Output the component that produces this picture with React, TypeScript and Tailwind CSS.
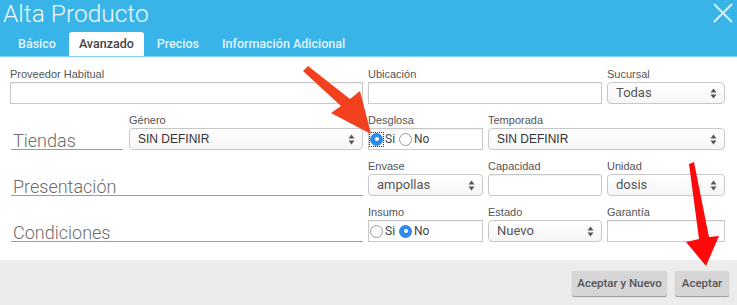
import React from 'react';

const label = "text-[11px] leading-[17px] text-[#555] h-[17px] pt-[1px]";
const inputBox = "h-[22px] border border-[#c8c8c8] bg-white shadow-[inset_0_1px_1px_rgba(0,0,0,0.06)]";

const SelectArrows = () => (
  <svg width="7" height="11" viewBox="0 0 7 11" className="shrink-0">
    <path d="M3.5 0.5 L6.5 4.5 L0.5 4.5 Z" fill="#555" />
    <path d="M3.5 10.5 L6.5 6.5 L0.5 6.5 Z" fill="#555" />
  </svg>
);

const Select: React.FC<{ value: string; sans?: boolean; pl?: string }> = ({ value, sans, pl }) => (
  <div
    className={`h-[22px] flex items-center justify-between pr-[7px] border border-[#c8c8c8] rounded-[4px] bg-gradient-to-b from-white to-[#f6f6f6] text-[#333] ${pl ?? 'pl-[8px]'} ${
      sans ? "font-['Liberation_Sans',Arial,sans-serif] text-[12px]" : "font-['Roboto',sans-serif] text-[13px] text-[#555]"
    }`}
  >
    <span>{value}</span>
    <SelectArrows />
  </div>
);

const Radio: React.FC<{ on?: boolean; focus?: boolean }> = ({ on, focus }) => (
  <span className={`inline-flex items-center justify-center ${focus ? 'outline-1 outline-dotted outline-[#333] outline-offset-0' : ''}`}>
    {on ? (
      <span className="w-[13px] h-[13px] rounded-full bg-[#2f8ce8] flex items-center justify-center">
        <span className="w-[4px] h-[4px] rounded-full bg-white" />
      </span>
    ) : (
      <span className="w-[13px] h-[13px] rounded-full border border-[#9a9a9a] bg-white" />
    )}
  </span>
);

const RadioGroup: React.FC<{ si: boolean }> = ({ si }) => (
  <div className={`${inputBox} flex items-center pl-[1px] text-[12px] text-[#444] font-['Roboto',sans-serif]`}>
    <Radio on={si} focus={si} />
    <span className="ml-[2px] mr-[4px]">Si</span>
    <Radio on={!si} />
    <span className="ml-[2px]">No</span>
  </div>
);

const Heading: React.FC<{ text: string; w: string }> = ({ text, w }) => (
  <div className={`${w} ml-[1px] h-[22px] flex items-end border-b border-[#9c9c9c] text-[18px] leading-[20px] font-light text-[#6b6b6b] font-['Roboto',sans-serif]`}>
    <span className="pl-[2px] translate-y-[2px]">{text}</span>
  </div>
);

export default function App() {
  return (
    <div className="relative w-[737px] h-[305px] bg-white overflow-hidden font-['Liberation_Sans',Arial,sans-serif]">
      {/* header */}
      <div className="bg-[#39b4e8] h-[57px] flex flex-col border-b border-[#7fd0f2]">
        <div className="flex justify-between items-start">
          <h1 className="pl-[3px] text-[24.5px] leading-[28px] font-light text-[#eef8fd] font-['Roboto',sans-serif]">Alta Producto</h1>
          <svg width="22" height="22" viewBox="0 0 22 22" className="mt-[2px] mr-[3px]">
            <path d="M2 2 L20 20 M20 2 L2 20" stroke="#d7f0fb" strokeWidth="2" />
          </svg>
        </div>
        <div className="mt-auto flex gap-[3px] pl-[8px] text-[12.5px] font-medium font-['Roboto',sans-serif] leading-[24px]">
          <span className="px-[10px] text-[#e2f3fb]">Básico</span>
          <span className="px-[10px] bg-white text-[#444] rounded-t-[3px]">Avanzado</span>
          <span className="px-[10px] text-[#e2f3fb]">Precios</span>
          <span className="px-[10px] text-[#e2f3fb]">Información Adicional</span>
        </div>
      </div>

      {/* body */}
      <div className="pl-[10px] pt-[8px] h-[203px] grid grid-cols-[353px_115px_114px_118px] gap-x-[5px] gap-y-[7px] content-start">
        {/* row 1 */}
        <div>
          <div className={label}>Proveedor Habitual</div>
          <div className={inputBox} />
        </div>
        <div className="col-span-2">
          <div className={label}>Ubicación</div>
          <div className={inputBox} />
        </div>
        <div>
          <div className={label}>Sucursal</div>
          <Select value="Todas" />
        </div>

        {/* row 2 */}
        <div className="flex gap-[6px] items-end">
          <Heading text="Tiendas" w="w-[112px]" />
          <div className="flex-1">
            <div className={label}>Género</div>
            <Select value="SIN DEFINIR" sans />
          </div>
        </div>
        <div>
          <div className={label}>Desglosa</div>
          <RadioGroup si />
        </div>
        <div className="col-span-2">
          <div className={label}>Temporada</div>
          <Select value="SIN DEFINIR" sans />
        </div>

        {/* row 3 */}
        <div className="flex items-end">
          <Heading text="Presentación" w="w-[352px]" />
        </div>
        <div>
          <div className={label}>Envase</div>
          <Select value="ampollas" />
        </div>
        <div>
          <div className={label}>Capacidad</div>
          <div className={`${inputBox} rounded-[3px]`} />
        </div>
        <div>
          <div className={label}>Unidad</div>
          <Select value="dosis" />
        </div>

        {/* row 4 */}
        <div className="flex items-end">
          <Heading text="Condiciones" w="w-[352px]" />
        </div>
        <div>
          <div className={label}>Insumo</div>
          <RadioGroup si={false} />
        </div>
        <div>
          <div className={label}>Estado</div>
          <Select value="Nuevo" />
        </div>
        <div>
          <div className={label}>Garantía</div>
          <div className={inputBox} />
        </div>
      </div>

      {/* footer */}
      <div className="h-[45px] bg-[#ececec] flex justify-end items-start pt-[11px] pr-[8px] gap-[8px] font-['Roboto',sans-serif] text-[11.5px] font-medium text-[#555]">
        <button className="h-[25px] w-[95px] bg-[#d6d6d6] rounded-[2px] shadow-[0_1px_1px_rgba(0,0,0,0.35)]">Aceptar y Nuevo</button>
        <button className="h-[25px] w-[54px] bg-[#d6d6d6] rounded-[2px] shadow-[0_1px_1px_rgba(0,0,0,0.35)]">Aceptar</button>
      </div>

      {/* annotation arrows */}
      <svg className="absolute inset-0 pointer-events-none" width="737" height="305" viewBox="0 0 737 305">
        <polygon points="303,71 308,66 350,99 360,91 371,134 331,113 341,106" fill="#f3401f" />
        <polygon points="689,164 694,162 709,237 719,236 706,266 686,242 699,239" fill="#ff0a0a" />
      </svg>
    </div>
  );
}
